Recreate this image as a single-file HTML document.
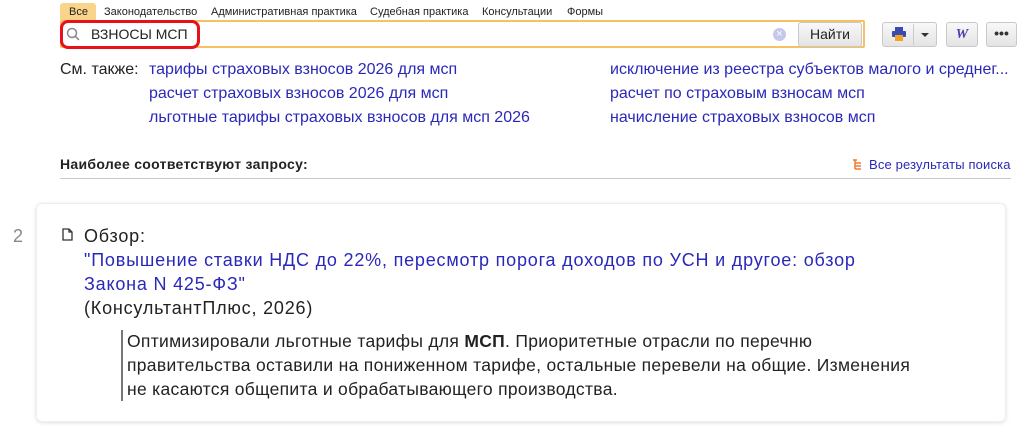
<!DOCTYPE html>
<html><head><meta charset="utf-8"><style>
*{margin:0;padding:0;box-sizing:border-box}
body{width:1024px;height:429px;background:#fff;font-family:"Segoe UI","Liberation Sans","DejaVu Sans",sans-serif;position:relative;overflow:hidden;color:#222}
.a{position:absolute;white-space:nowrap}
.tab{font-size:11px;top:6px;color:#222}
.lk{color:#2a28b8;font-size:16px}
.btn{position:absolute;top:22px;height:25px;border:1px solid #c9c9c9;border-radius:3px;background:linear-gradient(#f8f8f8,#e4e4e4)}
.t{font-size:18px;line-height:24px;letter-spacing:0.8px}
.q{font-size:17.5px;line-height:24px;letter-spacing:0.3px}
</style></head><body>
<div class="a" style="left:60px;top:3px;width:36px;height:17px;background:#fbd48c;border-radius:3px 3px 0 0"></div>
<div class="a tab" style="left:69px">Все</div>
<div class="a tab" style="left:104px">Законодательство</div>
<div class="a tab" style="left:211px">Административная практика</div>
<div class="a tab" style="left:370px">Судебная практика</div>
<div class="a tab" style="left:482px">Консультации</div>
<div class="a tab" style="left:567px">Формы</div>
<div class="a" style="left:60px;top:20px;width:805px;height:28px;border:2px solid #f7c060;border-radius:2px"></div>
<div class="a" style="left:60px;top:20px;width:140px;height:29px;border:3px solid #e8101a;border-radius:8px"></div>
<svg class="a" style="left:66px;top:27px" width="14" height="14"><circle cx="6" cy="6" r="4.5" fill="none" stroke="#888" stroke-width="1.5"/><line x1="9.3" y1="9.3" x2="13" y2="13" stroke="#888" stroke-width="1.5"/></svg>
<div class="a" style="left:91px;top:26px;font-size:14px">ВЗНОСЫ МСП</div>
<div class="a" style="left:773px;top:28px;width:13px;height:13px;border-radius:50%;background:#c4c8ea;color:#fff;font-size:11px;line-height:13px;text-align:center">×</div>
<div class="btn" style="left:798px;width:64px;font-size:14px;text-align:center;line-height:23px">Найти</div>
<div class="btn" style="left:882px;width:55px"></div>
<div class="a" style="left:913px;top:24px;width:1px;height:21px;background:#ccc"></div>
<svg class="a" style="left:891px;top:27px" width="16" height="15"><rect x="4" y="0" width="8" height="4" fill="#3a4ab0"/><rect x="1" y="4" width="14" height="6" rx="1" fill="#3a4ab0"/><rect x="4" y="8" width="8" height="6" fill="#f4a020"/></svg>
<svg class="a" style="left:921px;top:33px" width="8" height="5"><path d="M0 0h8L4 4z" fill="#333"/></svg>
<div class="btn" style="left:946px;width:32px;text-align:center;font:italic bold 14px 'Liberation Serif',serif;color:#4a3bb0;line-height:23px">W</div>
<div class="btn" style="left:986px;width:31px;text-align:center;font-size:14px;line-height:20px;font-weight:bold;color:#333">•••</div>
<div class="a" style="left:60px;top:61px;font-size:16px">См. также:</div>
<div class="a lk" style="left:149px;top:61px">тарифы страховых взносов 2026 для мсп</div>
<div class="a lk" style="left:149px;top:85px">расчет страховых взносов 2026 для мсп</div>
<div class="a lk" style="left:149px;top:109px">льготные тарифы страховых взносов для мсп 2026</div>
<div class="a lk" style="left:610px;top:61px">исключение из реестра субъектов малого и среднег...</div>
<div class="a lk" style="left:610px;top:85px">расчет по страховым взносам мсп</div>
<div class="a lk" style="left:610px;top:109px">начисление страховых взносов мсп</div>
<div class="a" style="left:60px;top:156px;font-size:14px;letter-spacing:0.3px;font-weight:bold">Наиболее соответствуют запросу:</div>
<svg class="a" style="left:853px;top:159px" width="10" height="11"><path d="M0 1h4M2 1v9M2 4h6M2 7h6M2 10h6" stroke="#f07a30" stroke-width="1.5" fill="none"/></svg>
<div class="a" style="left:869px;top:157px;font-size:13px;letter-spacing:0.15px;color:#2a28b8">Все результаты поиска</div>
<div class="a" style="left:60px;top:178px;width:951px;height:1px;background:#c8c8c8"></div>
<div class="a" style="left:36px;top:203px;width:970px;height:219px;border:1px solid #eee;border-radius:6px;box-shadow:0 1px 4px rgba(0,0,0,.12)"></div>
<div class="a t" style="left:13px;top:224px;color:#888">2</div>
<svg class="a" style="left:62px;top:228px" width="11" height="13"><path d="M1 1h6l3 3v8H1zM7 1v3h3" fill="none" stroke="#333" stroke-width="1.3"/></svg>
<div class="a t" style="left:84px;top:224px">Обзор:</div>
<div class="a t" style="left:84px;top:248px;color:#2a28b8">"Повышение ставки НДС до 22%, пересмотр порога доходов по УСН и другое: обзор</div>
<div class="a t" style="left:84px;top:272px;color:#2a28b8">Закона N 425-ФЗ"</div>
<div class="a t" style="left:84px;top:296px">(КонсультантПлюс, 2026)</div>
<div class="a" style="left:121px;top:330px;width:2px;height:71px;background:#777"></div>
<div class="a q" style="left:127px;top:329px">Оптимизировали льготные тарифы для <b>МСП</b>. Приоритетные отрасли по перечню</div>
<div class="a q" style="left:127px;top:353px">правительства оставили на пониженном тарифе, остальные перевели на общие. Изменения</div>
<div class="a q" style="left:127px;top:377px">не касаются общепита и обрабатывающего производства.</div>
</body></html>
